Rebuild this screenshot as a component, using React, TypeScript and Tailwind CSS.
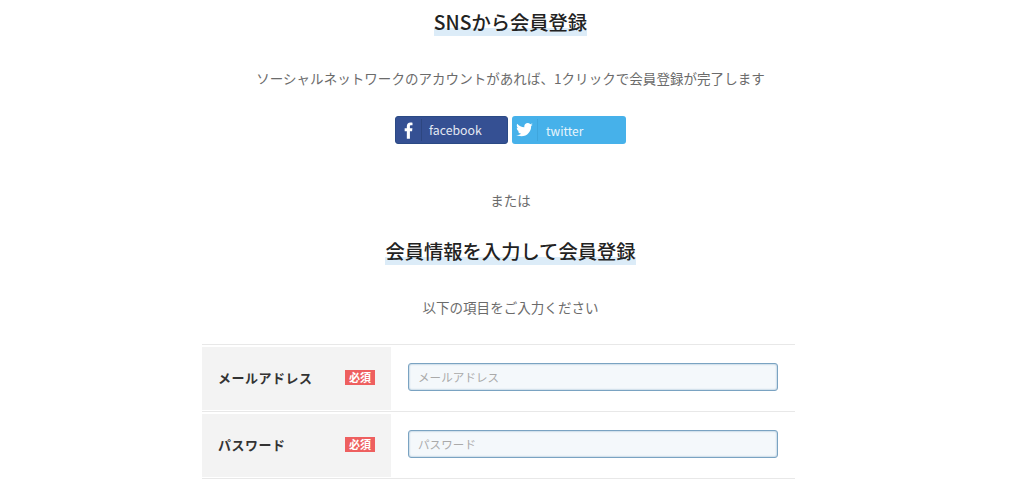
const font = "font-['Noto_Sans_CJK_JP','Noto_Sans',sans-serif]";

function Fb() {
  return (
    <svg width="10" height="17" viewBox="0 0 12 20" fill="#fff">
      <path d="M3.4 20V10.8H.8V7.4h2.6V5C3.4 2 5 .4 7.8.4c1 0 1.9.1 2.4.2v3H8.6c-1.2 0-1.5.6-1.5 1.6v2.2h3l-.4 3.4H7.1V20z" />
    </svg>
  );
}

function Tw() {
  return (
    <svg width="17" height="14" viewBox="0 0 24 20" fill="#fff">
      <path d="M24 2.4c-.9.4-1.8.7-2.8.8 1-.6 1.8-1.6 2.2-2.7-1 .6-2 1-3.1 1.2C19.3.7 18 0 16.6 0c-2.7 0-4.9 2.2-4.9 4.9 0 .4 0 .8.1 1.1C7.7 5.8 4.1 3.9 1.7.9c-.4.7-.7 1.6-.7 2.5 0 1.7.9 3.2 2.2 4.1-.8 0-1.6-.2-2.2-.6v.1c0 2.4 1.7 4.4 3.9 4.8-.4.1-.8.2-1.3.2-.3 0-.6 0-.9-.1.6 2 2.4 3.4 4.6 3.4-1.7 1.3-3.8 2.1-6.1 2.1-.4 0-.8 0-1.2-.1C2.2 18.3 4.8 19 7.5 19c9 0 14-7.5 14-14v-.6c1-.7 1.8-1.6 2.5-2z" />
    </svg>
  );
}

function Row({ label }: { label: string }) {
  return (
    <div className="flex h-[67px] border-b border-[#e8e8e8] pt-[2px] pb-[1px]">
      <div className="flex w-[189px] items-center justify-between bg-[#f3f3f3] pb-[2px] pl-[16px] pr-[16px]">
        <span className="text-[13px] font-bold tracking-[0.5px] text-[#333]">{label}</span>
        <span className="flex h-[15px] w-[30px] shrink-0 items-center justify-center bg-[#ee5f5f] text-[11px] font-bold text-white">必須</span>
      </div>
      <div className="flex flex-1 items-center pb-[3px] pl-[17px] pr-[17px]">
        <input
          placeholder={label}
          className="h-[28px] w-full rounded-[3px] border border-[#7aa3c2] bg-[#f4f8fb] px-[9px] text-[11.5px] tracking-[0.1px] shadow-[inset_0_0_2px_#7aa3c2] outline-none placeholder:text-[#aaa]"
        />
      </div>
    </div>
  );
}

export default function App() {
  return (
    <div className={`${font} h-[479px] w-[1021px] overflow-hidden bg-white text-[#555]`}>
      <div className="flex flex-col items-center">
        <h2 className="mt-[9px] bg-[linear-gradient(transparent_70%,#dcecf8_70%)] text-[19.3px] leading-[27px] font-medium text-[#222]">
          SNSから会員登録
        </h2>
        <p className="mt-[32px] text-[13.5px] leading-[20px] tracking-[0.05px] text-[#6b6b6b]">
          ソーシャルネットワークのアカウントがあれば、1クリックで会員登録が完了します
        </p>
        <div className="mt-[28px] flex gap-[4px]">
          <div className="flex h-[28px] w-[113px] items-center rounded-[3px] border border-[#2b4a85] bg-[#355093]">
            <div className="flex h-[22px] w-[26px] items-center justify-center border-r border-[#2d4680]">
              <Fb />
            </div>
            <span className="mt-[1px] pl-[7px] text-[12.3px] leading-none text-[#e3e8f2]">facebook</span>
          </div>
          <div className="flex h-[28px] w-[114px] items-center rounded-[3px] bg-[#46b1ea]">
            <div className="flex h-[22px] w-[26px] items-center justify-center border-r border-[#3fa6dd]">
              <Tw />
            </div>
            <span className="mt-[1px] pl-[8px] text-[12px] leading-none text-[#e8f5fc]">twitter</span>
          </div>
        </div>
        <p className="mt-[46px] text-[13.5px] leading-[20px] text-[#6b6b6b]">または</p>
        <h2 className="mt-[28px] bg-[linear-gradient(transparent_70%,#dcecf8_70%)] text-[19.3px] leading-[27px] font-medium text-[#222]">
          会員情報を入力して会員登録
        </h2>
        <p className="mt-[32px] text-[13.5px] leading-[20px] tracking-[0.05px] text-[#6b6b6b]">以下の項目をご入力ください</p>
      </div>
      <div className="ml-[202px] mt-[27px] w-[593px] border-t border-[#e8e8e8]">
        <Row label="メールアドレス" />
        <Row label="パスワード" />
      </div>
    </div>
  );
}
